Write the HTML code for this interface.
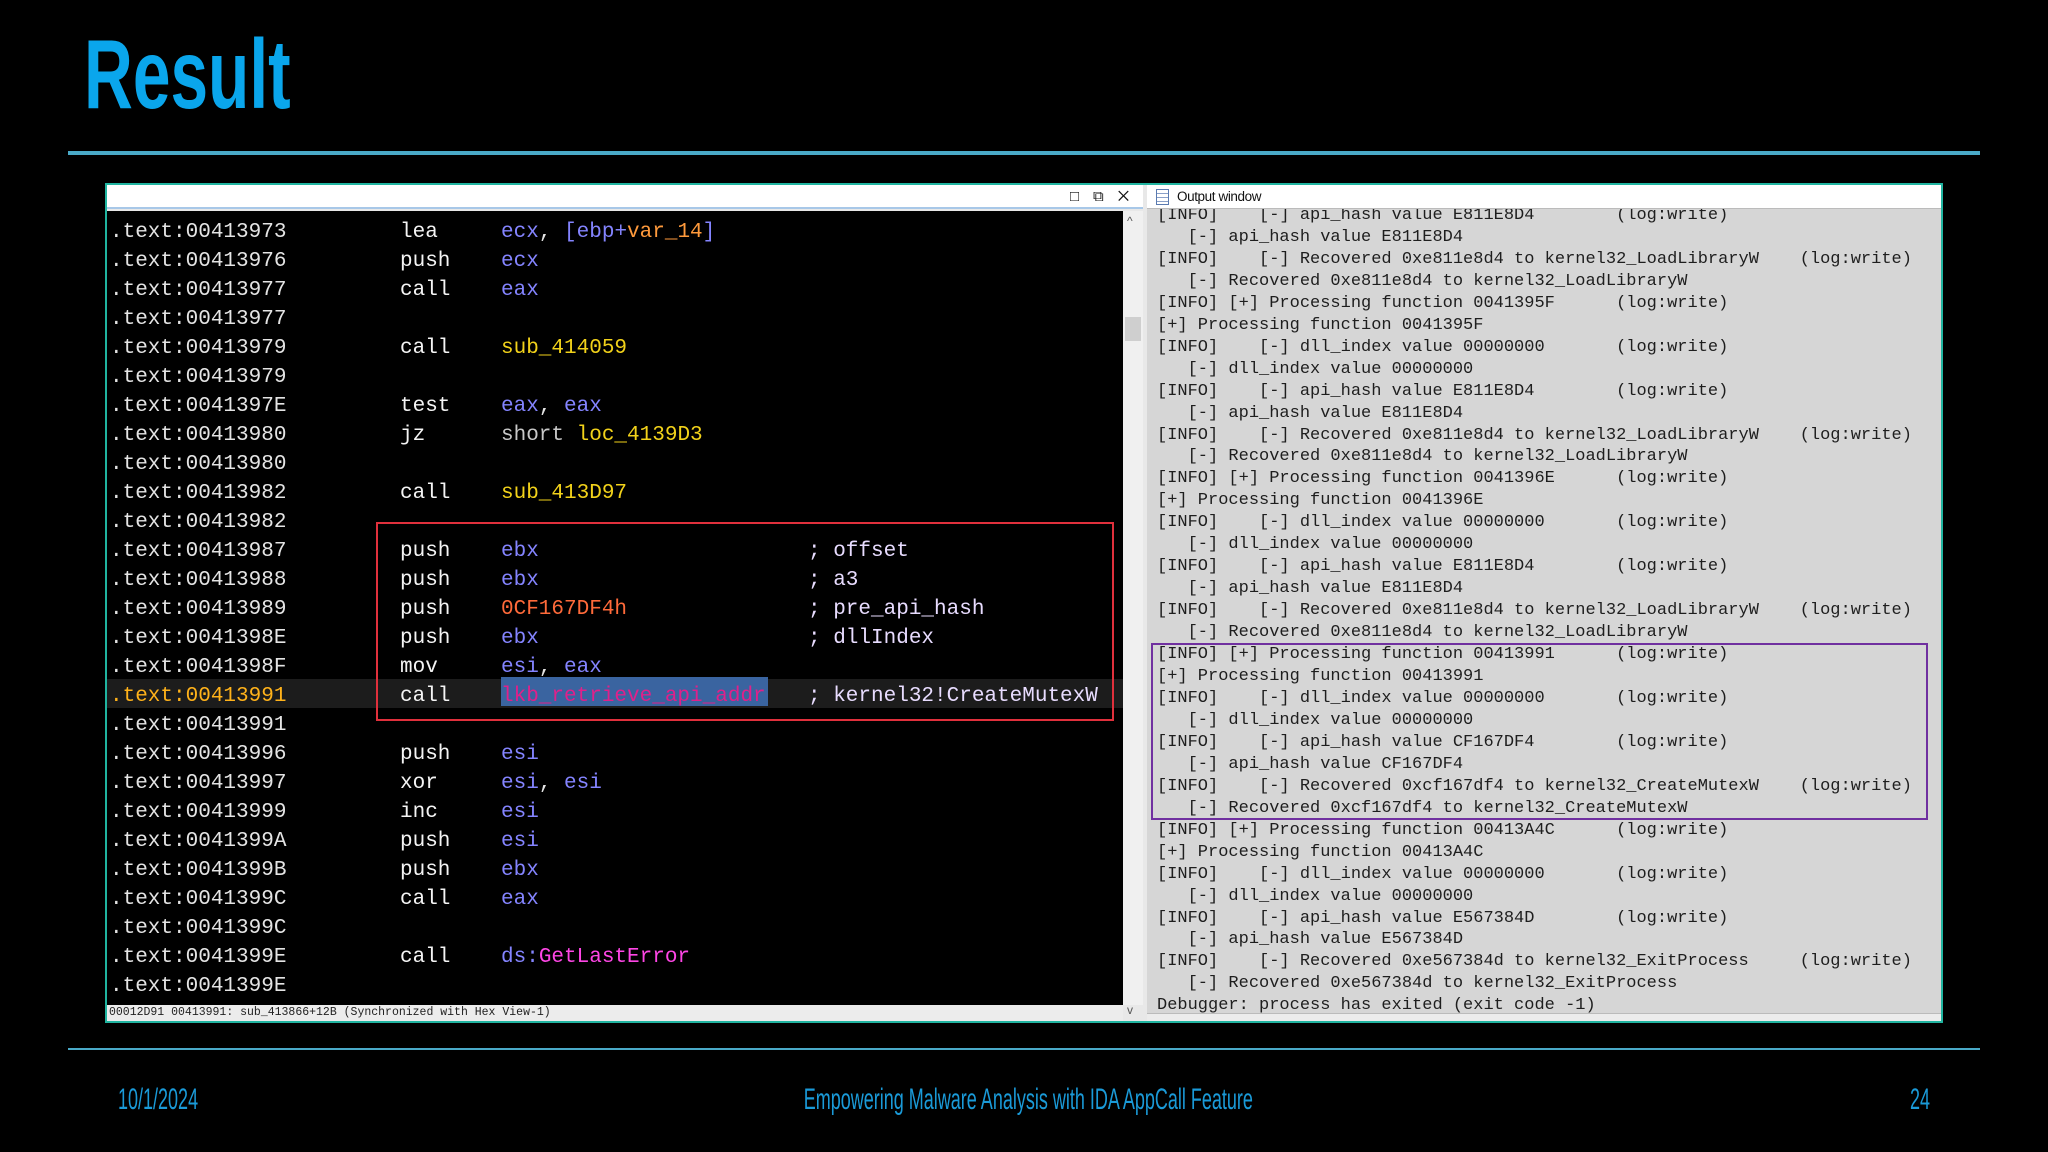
<!DOCTYPE html>
<html><head><meta charset="utf-8"><style>
*{margin:0;padding:0;box-sizing:border-box}
body{width:2048px;height:1152px;background:#000;position:relative;overflow:hidden;font-family:"Liberation Sans",sans-serif}
.abs{position:absolute}
.title{left:84px;top:14px;font-family:"Liberation Sans Narrow","Liberation Sans",sans-serif;font-weight:bold;font-size:98px;color:#0aa6ec;transform:scaleX(.69);transform-origin:0 0;line-height:120px}
.foot{font-family:"Liberation Sans Narrow","Liberation Sans",sans-serif;color:#1a9ad8;font-size:30px;line-height:32px;white-space:nowrap}
.code{font-family:"Liberation Mono",monospace;font-size:21px;line-height:29px;white-space:pre;color:#e4e4e4}
.r{color:#8484ff}.y{color:#f2d21a}.o{color:#ff9a3c}.w{color:#f4f4f4}.c{color:#e8dcff}.m{color:#ff46e6}.g{color:#c8c8c8}
.out{font-family:"Liberation Mono",monospace;font-size:17px;line-height:21.95px;white-space:pre;color:#1e1e1e;position:absolute;left:1157px;top:202px}
</style></head><body>
<div class="abs title">Result</div>
<div class="abs" style="left:68px;top:151px;width:1912px;height:4px;background:#4aaac8"></div>

<div class="abs" style="left:105px;top:183px;width:1838px;height:840px;background:#e8e8e8;border:2px solid #20b4a0"></div>
<div class="abs" style="left:107px;top:185px;width:1036px;height:24px;background:#fff;border-bottom:2px solid #a8c8e8"></div>
<div class="abs" style="left:1070px;top:188px;font-size:15px;color:#111;letter-spacing:14px">&#9633;&#10697;&#10005;</div>
<div class="abs" style="left:107px;top:211px;width:1016px;height:794px;background:#000"></div>
<div class="abs" style="left:1123px;top:211px;width:20px;height:794px;background:#f0f0f0"></div>
<div class="abs" style="left:1125px;top:317px;width:16px;height:24px;background:#cfcfcf"></div>
<div class="abs" style="left:1127px;top:214px;font-size:12px;color:#555">^</div>
<div class="abs" style="left:1127px;top:1003px;font-size:12px;color:#555">v</div>
<div class="abs" style="left:107px;top:1005px;width:1016px;height:16px;background:#ececec"></div>
<div class="abs" style="left:109px;top:1005px;font-family:'Liberation Mono',monospace;font-size:11.5px;line-height:16px;color:#222;white-space:pre">00012D91 00413991: sub_413866+12B (Synchronized with Hex View-1)</div>

<div class="abs" style="left:107px;top:679px;width:1016px;height:29px;background:#1c1c1c"></div>
<div class="abs" style="left:501px;top:677px;width:267px;height:29px;background:#3a64a0"></div>

<div class="abs code" style="left:110px;top:218px">.text:00413973
.text:00413976
.text:00413977
.text:00413977
.text:00413979
.text:00413979
.text:0041397E
.text:00413980
.text:00413980
.text:00413982
.text:00413982
.text:00413987
.text:00413988
.text:00413989
.text:0041398E
.text:0041398F
<span style="color:#ffb21a">.text:00413991</span>
.text:00413991
.text:00413996
.text:00413997
.text:00413999
.text:0041399A
.text:0041399B
.text:0041399C
.text:0041399C
.text:0041399E
.text:0041399E</div>
<div class="abs code w" style="left:400px;top:218px">lea
push
call

call

test
jz

call

push
push
push
push
mov
call

push
xor
inc
push
push
call

call</div>
<div class="abs code" style="left:501px;top:218px"><span class="r">ecx</span>, <span class="r">[ebp+</span><span class="o">var_14</span><span class="r">]</span>
<span class="r">ecx</span>
<span class="r">eax</span>

<span class="y">sub_414059</span>

<span class="r">eax</span>, <span class="r">eax</span>
<span class="g">short</span> <span class="y">loc_4139D3</span>

<span class="y">sub_413D97</span>

<span class="r">ebx</span>
<span class="r">ebx</span>
<span style="color:#ff6a3a">0CF167DF4h</span>
<span class="r">ebx</span>
<span class="r">esi</span>, <span class="r">eax</span>
<span style="color:#e0208a">lkb_retrieve_api_addr</span>

<span class="r">esi</span>
<span class="r">esi</span>, <span class="r">esi</span>
<span class="r">esi</span>
<span class="r">esi</span>
<span class="r">ebx</span>
<span class="r">eax</span>

<span class="r">ds:</span><span class="m">GetLastError</span></div>
<div class="abs code c" style="left:808px;top:537px">; offset
; a3
; pre_api_hash
; dllIndex

; kernel32!CreateMutexW</div>
<div class="abs" style="left:376px;top:522px;width:738px;height:199px;border:2px solid #e0303c"></div>

<div class="abs" style="left:1147px;top:185px;width:794px;height:836px;background:#d6d6d6;overflow:hidden">
<div class="out" style="left:10px;top:20px">[INFO]    [-] api_hash value E811E8D4        (log:write)
   [-] api_hash value E811E8D4
[INFO]    [-] Recovered 0xe811e8d4 to kernel32_LoadLibraryW    (log:write)
   [-] Recovered 0xe811e8d4 to kernel32_LoadLibraryW
[INFO] [+] Processing function 0041395F      (log:write)
[+] Processing function 0041395F
[INFO]    [-] dll_index value 00000000       (log:write)
   [-] dll_index value 00000000
[INFO]    [-] api_hash value E811E8D4        (log:write)
   [-] api_hash value E811E8D4
[INFO]    [-] Recovered 0xe811e8d4 to kernel32_LoadLibraryW    (log:write)
   [-] Recovered 0xe811e8d4 to kernel32_LoadLibraryW
[INFO] [+] Processing function 0041396E      (log:write)
[+] Processing function 0041396E
[INFO]    [-] dll_index value 00000000       (log:write)
   [-] dll_index value 00000000
[INFO]    [-] api_hash value E811E8D4        (log:write)
   [-] api_hash value E811E8D4
[INFO]    [-] Recovered 0xe811e8d4 to kernel32_LoadLibraryW    (log:write)
   [-] Recovered 0xe811e8d4 to kernel32_LoadLibraryW
[INFO] [+] Processing function 00413991      (log:write)
[+] Processing function 00413991
[INFO]    [-] dll_index value 00000000       (log:write)
   [-] dll_index value 00000000
[INFO]    [-] api_hash value CF167DF4        (log:write)
   [-] api_hash value CF167DF4
[INFO]    [-] Recovered 0xcf167df4 to kernel32_CreateMutexW    (log:write)
   [-] Recovered 0xcf167df4 to kernel32_CreateMutexW
[INFO] [+] Processing function 00413A4C      (log:write)
[+] Processing function 00413A4C
[INFO]    [-] dll_index value 00000000       (log:write)
   [-] dll_index value 00000000
[INFO]    [-] api_hash value E567384D        (log:write)
   [-] api_hash value E567384D
[INFO]    [-] Recovered 0xe567384d to kernel32_ExitProcess     (log:write)
   [-] Recovered 0xe567384d to kernel32_ExitProcess
Debugger: process has exited (exit code -1)</div>
</div>
<div class="abs" style="left:1147px;top:185px;width:794px;height:24px;background:#fff;border-bottom:1px solid #bbb"></div>
<div class="abs" style="left:1156px;top:189px;width:13px;height:16px;border:1px solid #5a7ab0;background:repeating-linear-gradient(#fff 0 3px,#8aa0c8 3px 4px)"></div>
<div class="abs" style="left:1177px;top:189px;font-size:13.5px;color:#111;letter-spacing:-.4px">Output window</div>
<div class="abs" style="left:1147px;top:1013px;width:794px;height:8px;background:#ececec;border-top:1px solid #bbb"></div>
<div class="abs" style="left:1151px;top:643px;width:777px;height:177px;border:2px solid #7030a0"></div>

<div class="abs" style="left:68px;top:1048px;width:1912px;height:2px;background:#4aaac8"></div>
<div class="abs foot" style="left:118px;top:1084px;transform:scaleX(.6);transform-origin:0 0">10/1/2024</div>
<div class="abs foot" style="left:0;width:2048px;top:1084px;text-align:center"><span style="display:inline-block;transform:scaleX(.6);margin-left:8px">Empowering Malware Analysis with IDA AppCall Feature</span></div>
<div class="abs foot" style="left:1910px;top:1084px;transform:scaleX(.6);transform-origin:0 0">24</div>
</body></html>
